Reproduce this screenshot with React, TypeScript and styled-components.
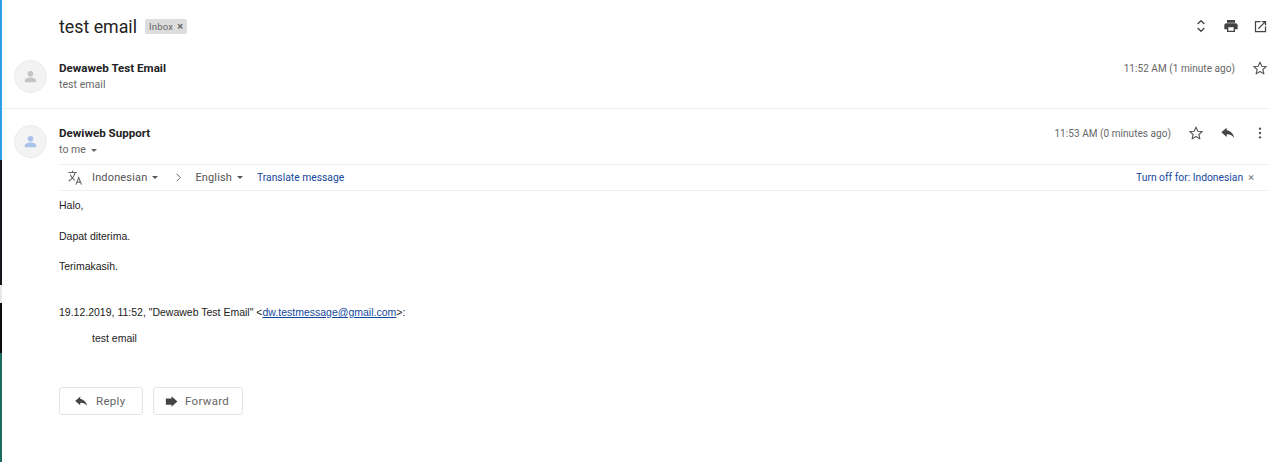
import React from 'react';
import styled, { createGlobalStyle } from 'styled-components';

const GlobalStyle = createGlobalStyle`
  html, body {
    margin: 0;
    padding: 0;
    background: #ffffff;
  }
  body {
    font-family: 'Roboto', 'Liberation Sans', sans-serif;
    -webkit-font-smoothing: antialiased;
  }
`;

const Page = styled.div`
  display: flex;
  width: 1280px;
  height: 462px;
  overflow: hidden;
  background: #ffffff;
`;

const EdgeStrip = styled.div`
  width: 2px;
  flex: none;
  display: flex;
  flex-direction: column;
`;

const EdgeSegment = styled.div<{ $color: string; $size: number }>`
  height: ${(p) => p.$size}px;
  background: ${(p) => p.$color};
`;

const Main = styled.div`
  flex: 1;
  min-width: 0;
  padding-right: 12px;
`;

const Header = styled.header`
  height: 52px;
  margin-bottom: 8px;
  display: flex;
  align-items: center;
  padding-left: 57px;
`;

const Subject = styled.h1`
  margin: 0;
  font-size: 17.8px;
  font-weight: 400;
  color: #222222;
`;

const Label = styled.span`
  margin-left: 8px;
  height: 15px;
  padding: 0 4px;
  display: inline-flex;
  align-items: center;
  gap: 4px;
  border-radius: 2px;
  background: #dddddd;
  color: #666666;
  font-size: 9.5px;
  letter-spacing: 0.2px;
`;

const LabelClose = styled.span`
  font-size: 11px;
  font-weight: 700;
  line-height: 1;
`;

const HeaderTools = styled.div`
  margin-left: auto;
  display: flex;
  align-items: center;
  gap: 14px;
  color: #444444;
`;

const MessageHead = styled.div<{ $height: number }>`
  height: ${(p) => p.$height}px;
  display: flex;
  align-items: flex-start;
  padding-left: 12px;
`;

const Avatar = styled.div<{ $color: string }>`
  width: 33px;
  height: 33px;
  flex: none;
  margin-right: 12px;
  border-radius: 50%;
  background: #f3f3f3;
  border: 1px solid #ececec;
  box-sizing: border-box;
  display: flex;
  align-items: center;
  justify-content: center;
  color: ${(p) => p.$color};
`;

const Who = styled.div`
  padding-top: 1px;
`;

const Name = styled.div`
  font-size: 11.6px;
  line-height: 14px;
  font-weight: 700;
  color: #222222;
`;

const Sub = styled.div`
  margin-top: 3px;
  display: flex;
  align-items: center;
  gap: 5px;
  font-size: 10.5px;
  line-height: 14px;
  color: #666666;
  letter-spacing: 0.05px;
`;

const Meta = styled.div`
  margin-left: auto;
  height: 16px;
  display: flex;
  align-items: center;
  color: #666666;
`;

const Time = styled.span`
  font-size: 10px;
  letter-spacing: 0.05px;
  color: #666666;
`;

const MetaIcons = styled.div<{ $gap: number; $left: number }>`
  display: flex;
  align-items: center;
  gap: ${(p) => p.$gap}px;
  margin-left: ${(p) => p.$left}px;
`;

const Divider = styled.hr`
  margin: 0 0 16px;
  border: 0;
  border-top: 1px solid #efefef;
`;

const TranslateBar = styled.div`
  margin-left: 57px;
  height: 25px;
  display: flex;
  align-items: center;
  padding: 0 14px 0 8px;
  border-top: 1px solid #efefef;
  border-bottom: 1px solid #efefef;
  font-size: 11px;
  color: #555555;
`;

const Lang = styled.span<{ $left: number }>`
  margin-left: ${(p) => p.$left}px;
  display: inline-flex;
  align-items: center;
  gap: 5px;
  letter-spacing: 0.15px;
`;

const Caret = styled.i`
  display: inline-block;
  width: 0;
  height: 0;
  border-left: 3px solid transparent;
  border-right: 3px solid transparent;
  border-top: 3px solid currentColor;
`;

const TextLink = styled.span<{ $left?: number; $auto?: boolean }>`
  margin-left: ${(p) => (p.$auto ? 'auto' : `${p.$left ?? 0}px`)};
  font-size: 10.3px;
  color: #15479d;
`;

const Dismiss = styled.span`
  margin-left: 5px;
  font-size: 11px;
  color: #777777;
`;

const Body = styled.div`
  margin-left: 57px;
  padding-top: 8px;
  font-family: 'Liberation Sans', Arial, sans-serif;
  font-size: 10.5px;
  color: #222222;
`;

const Para = styled.p<{ $gap: number }>`
  margin: 0 0 ${(p) => p.$gap}px;
  line-height: 13px;
`;

const Quote = styled.p`
  margin: 0;
  padding-left: 33px;
  line-height: 13px;
`;

const Mail = styled.span`
  color: #15479d;
  text-decoration: underline;
`;

const Actions = styled.div`
  margin: 42px 0 0 57px;
  display: flex;
  gap: 10px;
`;

const ActionButton = styled.button<{ $width: number; $pad: number; $gap: number }>`
  width: ${(p) => p.$width}px;
  height: 28px;
  padding: 0 0 0 ${(p) => p.$pad}px;
  display: flex;
  align-items: center;
  gap: ${(p) => p.$gap}px;
  background: #ffffff;
  border: 1px solid #e4e4e4;
  border-radius: 3px;
  font-family: inherit;
  font-size: 11.5px;
  letter-spacing: 0.3px;
  color: #666666;
`;

const Person = () => (
  <svg width="15" height="15" viewBox="0 0 24 24" fill="currentColor">
    <circle cx="12" cy="7.5" r="4.5" />
    <path d="M3 21v-2.5C3 15 8 13.5 12 13.5s9 1.5 9 5V21z" />
  </svg>
);

const Star = () => (
  <svg width="16" height="16" viewBox="0 0 24 24" fill="none" stroke="#555555" strokeWidth="1.7" strokeLinejoin="round">
    <path d="M12 3.2l2.7 6.1 6.6.6-5 4.4 1.5 6.5-5.8-3.4-5.8 3.4 1.5-6.5-5-4.4 6.6-.6z" />
  </svg>
);

const ReplyIcon = ({ size = 16 }: { size?: number }) => (
  <svg width={size} height={size} viewBox="0 0 24 24" fill="#444444">
    <path d="M10 8V4l-8 7 8 7v-4.1c5 0 8.500 1.600 11 5.100-1-5-4-10-11-11z" />
  </svg>
);

const ForwardIcon = () => (
  <svg width="15" height="15" viewBox="0 0 24 24" fill="#444444">
    <path d="M12 7V3.500l9.500 8.500-9.500 8.500V17H3V7z" />
  </svg>
);

const Dots = () => (
  <svg width="16" height="16" viewBox="0 0 24 24" fill="#555555">
    <circle cx="12" cy="5.500" r="1.800" />
    <circle cx="12" cy="12" r="1.800" />
    <circle cx="12" cy="18.500" r="1.800" />
  </svg>
);

const ExpandIcon = () => (
  <svg width="16" height="16" viewBox="0 0 24 24" fill="none" stroke="#444444" strokeWidth="2">
    <path d="M7 9l5-5 5 5M7 15l5 5 5-5" />
  </svg>
);

const PrintIcon = () => (
  <svg width="16" height="16" viewBox="0 0 24 24" fill="#444444">
    <path d="M19 8H5c-1.700 0-3 1.300-3 3v6h4v4h12v-4h4v-6c0-1.700-1.300-3-3-3zm-3 11H8v-5h8zM18 3H6v4h12z" />
  </svg>
);

const PopoutIcon = () => (
  <svg width="15" height="15" viewBox="0 0 24 24" fill="#444444">
    <path d="M19 19H5V5h7V3H3v18h18v-9h-2zM14 3v2h3.600l-9.800 9.800 1.400 1.400L19 6.400V10h2V3z" />
  </svg>
);

const TranslateIcon = () => (
  <svg width="17" height="17" viewBox="0 0 24 24" fill="none" stroke="#666666" strokeWidth="1.500">
    <path d="M2 5h12M8 2v3M11.500 5C10.500 9 7 14 2.500 17M4.500 8c1 3 4 6 6.500 8" />
    <path d="M12.500 22l4-10 4 10M14 18.500h5" />
  </svg>
);

const ChevronRight = () => (
  <svg width="9" height="9" viewBox="0 0 24 24" fill="none" stroke="#666666" strokeWidth="2.600">
    <path d="M7 2l10 10-10 10" />
  </svg>
);

const edgeSegments = [
  { color: '#2f9fe6', size: 160 },
  { color: '#14181c', size: 125 },
  { color: '#e8e8e8', size: 18 },
  { color: '#0c0c0c', size: 50 },
  { color: '#1d6d63', size: 109 },
];

const App: React.FC = () => {
  return (
    <Page>
      <GlobalStyle />
      <EdgeStrip>
        {edgeSegments.map((s, i) => (
          <EdgeSegment key={i} $color={s.color} $size={s.size} />
        ))}
      </EdgeStrip>
      <Main>
        <Header>
          <Subject>test email</Subject>
          <Label>
            Inbox <LabelClose>×</LabelClose>
          </Label>
          <HeaderTools>
            <ExpandIcon />
            <PrintIcon />
            <PopoutIcon />
          </HeaderTools>
        </Header>

        <MessageHead $height={48}>
          <Avatar $color="#c4c4c4">
            <Person />
          </Avatar>
          <Who>
            <Name>Dewaweb Test Email</Name>
            <Sub>test email</Sub>
          </Who>
          <Meta>
            <Time>11:52 AM (1 minute ago)</Time>
            <MetaIcons $gap={0} $left={17}>
              <Star />
            </MetaIcons>
          </Meta>
        </MessageHead>
        <Divider />

        <MessageHead $height={39}>
          <Avatar $color="#a9c3ec">
            <Person />
          </Avatar>
          <Who>
            <Name>Dewiweb Support</Name>
            <Sub>
              to me <Caret />
            </Sub>
          </Who>
          <Meta>
            <Time>11:53 AM (0 minutes ago)</Time>
            <MetaIcons $gap={16} $left={17}>
              <Star />
              <ReplyIcon />
              <Dots />
            </MetaIcons>
          </Meta>
        </MessageHead>

        <TranslateBar>
          <TranslateIcon />
          <Lang $left={8}>
            Indonesian <Caret />
          </Lang>
          <Lang $left={16}>
            <ChevronRight />
          </Lang>
          <Lang $left={12}>
            English <Caret />
          </Lang>
          <TextLink $left={14}>Translate message</TextLink>
          <TextLink $auto>Turn off for: Indonesian</TextLink>
          <Dismiss>×</Dismiss>
        </TranslateBar>

        <Body>
          <Para $gap={18}>Halo,</Para>
          <Para $gap={17}>Dapat diterima.</Para>
          <Para $gap={33}>Terimakasih.</Para>
          <Para $gap={13}>
            19.12.2019, 11:52, "Dewaweb Test Email" &lt;<Mail>dw.testmessage@gmail.com</Mail>&gt;:
          </Para>
          <Quote>test email</Quote>
        </Body>

        <Actions>
          <ActionButton $width={84} $pad={14} $gap={7}>
            <ReplyIcon size={15} />
            Reply
          </ActionButton>
          <ActionButton $width={90} $pad={10} $gap={6}>
            <ForwardIcon />
            Forward
          </ActionButton>
        </Actions>
      </Main>
    </Page>
  );
};

export default App;
